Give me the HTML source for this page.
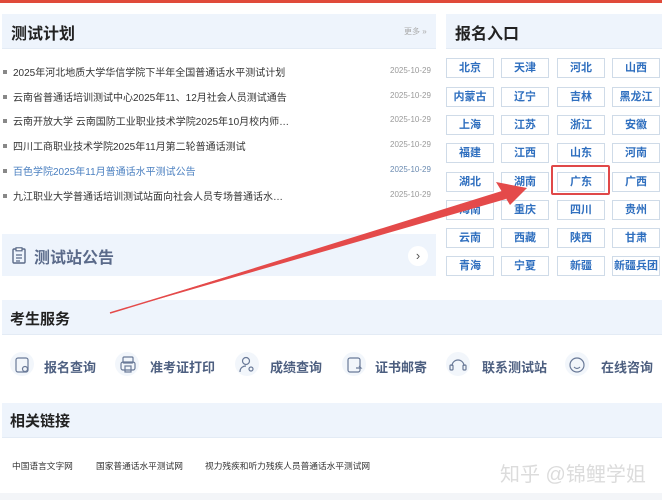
<!DOCTYPE html>
<html><head><meta charset="utf-8"><style>
*{margin:0;padding:0;box-sizing:border-box}
body{width:662px;height:500px;position:relative;overflow:hidden;background:#fff;font-family:"Liberation Sans","Noto Sans CJK SC",sans-serif;color:#333}
.a{position:absolute;white-space:nowrap}
.hd{position:absolute;background:#eef4fc;border-bottom:1px solid #e3ebf5}
.ht{position:absolute;font-weight:bold;font-size:16px;color:#222}
.li{position:absolute;left:3px;font-size:10px;color:#333;white-space:nowrap}
.li:before{content:"";display:inline-block;width:4px;height:4px;background:#888;margin-right:6px;vertical-align:2px}
.dt{position:absolute;left:390px;font-size:8px;color:#999}
.c{position:absolute;width:48px;height:20px;border:1px solid #cfdbe8;background:#fff;color:#2f6fbf;font-size:11px;font-weight:bold;text-align:center;line-height:18px}
.sv{position:absolute;top:357px;font-size:13px;font-weight:bold;color:#4d5f80}
.ic{position:absolute;top:352px;width:24px;height:24px;border-radius:50%;background:#f2f6fb}
.lk{position:absolute;top:459px;font-size:8.7px;color:#333}
</style></head><body>
<div class="a" style="left:0;top:0;width:662px;height:3px;background:#e04a3a"></div>
<div class="hd" style="left:2px;top:14px;width:434px;height:35px"></div>
<div class="ht" style="left:11px;top:20px">测试计划</div>
<div class="a" style="left:404px;top:26px;font-size:8px;color:#aaa">更多 »</div>
<div class="hd" style="left:446px;top:14px;width:216px;height:35px"></div>
<div class="ht" style="left:455px;top:20px">报名入口</div>

<div class="li" style="top:64px">2025年河北地质大学华信学院下半年全国普通话水平测试计划</div><div class="dt" style="top:66px">2025-10-29</div>
<div class="li" style="top:89px">云南省普通话培训测试中心2025年11、12月社会人员测试通告</div><div class="dt" style="top:91px">2025-10-29</div>
<div class="li" style="top:113px">云南开放大学 云南国防工业职业技术学院2025年10月校内师…</div><div class="dt" style="top:115px">2025-10-29</div>
<div class="li" style="top:138px">四川工商职业技术学院2025年11月第二轮普通话测试</div><div class="dt" style="top:140px">2025-10-29</div>
<div class="li" style="top:163px;color:#4a7fc0">百色学院2025年11月普通话水平测试公告</div><div class="dt" style="top:165px;color:#6a8ab0">2025-10-29</div>
<div class="li" style="top:188px">九江职业大学普通话培训测试站面向社会人员专场普通话水…</div><div class="dt" style="top:190px">2025-10-29</div>

<div class="hd" style="left:2px;top:234px;width:434px;height:42px;border:none"></div>
<svg class="a" style="left:11px;top:247px" width="16" height="17" viewBox="0 0 16 17"><rect x="2" y="2" width="12" height="14" rx="1" fill="none" stroke="#5a6a88" stroke-width="1.4"/><rect x="5" y="0.8" width="6" height="3" fill="#fff" stroke="#5a6a88" stroke-width="1.2"/><path d="M5 8h6M5 11h6M5 14h4" stroke="#5a6a88" stroke-width="1.2"/></svg>
<div class="a" style="left:34px;top:244px;font-size:16px;font-weight:bold;color:#5a6a8a">测试站公告</div>
<div class="a" style="left:408px;top:246px;width:20px;height:20px;border-radius:50%;background:#fff;color:#555;font-size:13px;text-align:center;line-height:19px">›</div>

<div class="c" style="left:446px;top:58px">北京</div><div class="c" style="left:501px;top:58px">天津</div><div class="c" style="left:557px;top:58px">河北</div><div class="c" style="left:612px;top:58px">山西</div>
<div class="c" style="left:446px;top:87px">内蒙古</div><div class="c" style="left:501px;top:87px">辽宁</div><div class="c" style="left:557px;top:87px">吉林</div><div class="c" style="left:612px;top:87px">黑龙江</div>
<div class="c" style="left:446px;top:115px">上海</div><div class="c" style="left:501px;top:115px">江苏</div><div class="c" style="left:557px;top:115px">浙江</div><div class="c" style="left:612px;top:115px">安徽</div>
<div class="c" style="left:446px;top:143px">福建</div><div class="c" style="left:501px;top:143px">江西</div><div class="c" style="left:557px;top:143px">山东</div><div class="c" style="left:612px;top:143px">河南</div>
<div class="c" style="left:446px;top:172px">湖北</div><div class="c" style="left:501px;top:172px">湖南</div><div class="c" style="left:557px;top:172px">广东</div><div class="c" style="left:612px;top:172px">广西</div>
<div class="c" style="left:446px;top:200px">海南</div><div class="c" style="left:501px;top:200px">重庆</div><div class="c" style="left:557px;top:200px">四川</div><div class="c" style="left:612px;top:200px">贵州</div>
<div class="c" style="left:446px;top:228px">云南</div><div class="c" style="left:501px;top:228px">西藏</div><div class="c" style="left:557px;top:228px">陕西</div><div class="c" style="left:612px;top:228px">甘肃</div>
<div class="c" style="left:446px;top:256px">青海</div><div class="c" style="left:501px;top:256px">宁夏</div><div class="c" style="left:557px;top:256px">新疆</div><div class="c" style="left:612px;top:256px">新疆兵团</div>
<div class="a" style="left:551px;top:165px;width:59px;height:30px;border:2.5px solid #e04848;border-radius:2px"></div>

<div class="hd" style="left:2px;top:300px;width:660px;height:35px"></div>
<div class="ht" style="left:10px;top:308px;font-size:15px">考生服务</div>
<div class="hd" style="left:2px;top:403px;width:660px;height:35px"></div>
<div class="ht" style="left:10px;top:410px;font-size:15px">相关链接</div>

<svg class="a" style="left:0;top:0" width="662" height="500"><path d="M110 313 L505 190 L506 199 Z" fill="#e44a4a"/><path d="M110 313 L506 193" stroke="#e44a4a" stroke-width="1.5"/><path d="M527 188 L496 182 L510 205 Z" fill="#e44a4a"/></svg>

<div class="ic" style="left:10px"></div><div class="ic" style="left:115px"></div><div class="ic" style="left:235px"></div><div class="ic" style="left:342px"></div><div class="ic" style="left:446px"></div><div class="ic" style="left:565px"></div>
<svg class="a" style="left:0;top:355px" width="662" height="20" fill="none" stroke="#6a7a98" stroke-width="1.2">
<rect x="16" y="3" width="12" height="14" rx="2"/><circle cx="25" cy="14" r="2.5"/>
<rect x="123" y="2" width="10" height="6" rx="1"/><rect x="121" y="7" width="14" height="8" rx="2"/><rect x="125" y="11" width="6" height="6"/>
<circle cx="246" cy="6" r="3.5"/><path d="M240 17c0-5 4-6 6-6"/><circle cx="251" cy="14" r="2"/>
<rect x="348" y="3" width="12" height="14" rx="2"/><path d="M356 13h5l-2-2"/>
<path d="M452 11a6 6 0 0 1 12 0"/><rect x="450" y="10" width="3" height="5" rx="1"/><rect x="463" y="10" width="3" height="5" rx="1"/>
<circle cx="577" cy="10" r="7"/><path d="M574 12c2 2 4 2 6 0"/></svg>
<div class="sv" style="left:44px">报名查询</div><div class="sv" style="left:150px">准考证打印</div><div class="sv" style="left:270px">成绩查询</div><div class="sv" style="left:375px">证书邮寄</div><div class="sv" style="left:482px">联系测试站</div><div class="sv" style="left:601px">在线咨询</div>

<div class="lk" style="left:12px">中国语言文字网</div><div class="lk" style="left:96px">国家普通话水平测试网</div><div class="lk" style="left:205px">视力残疾和听力残疾人员普通话水平测试网</div>
<div class="a" style="left:500px;top:458px;font-size:20px;color:#dcdcdc">知乎 @锦鲤学姐</div>
<div class="a" style="left:0;top:493px;width:662px;height:7px;background:#f3f5f8"></div>
</body></html>
